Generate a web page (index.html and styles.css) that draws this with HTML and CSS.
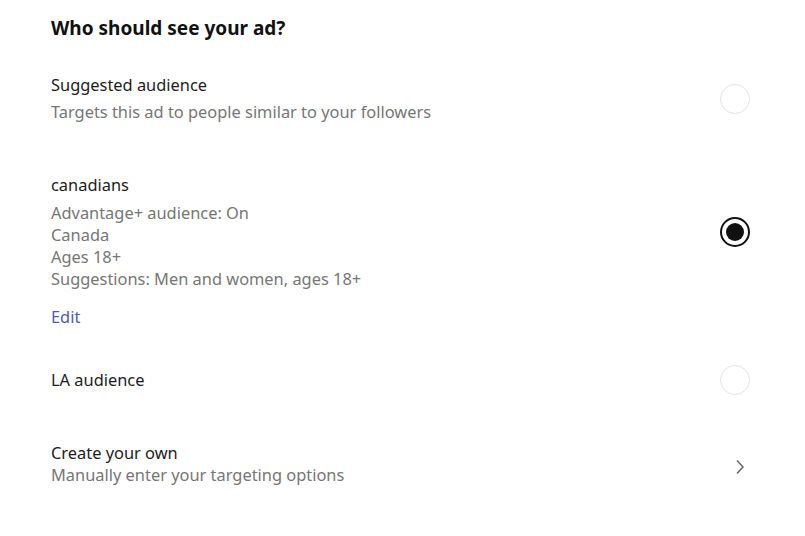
FILE: index.html
```html
<!DOCTYPE html>
<html>
<head>
<meta charset="utf-8">
<link rel="stylesheet" href="styles.css">
</head>
<body>
<div class="page">
  <h1 class="title">Who should see your ad?</h1>

  <div class="row row-suggested">
    <div class="info">
      <div class="name">Suggested audience</div>
      <div class="sub sub-gap">Targets this ad to people similar to your followers</div>
    </div>
    <span class="radio"></span>
  </div>

  <div class="row row-canadians">
    <div class="info">
      <div class="main-block">
        <div class="name">canadians</div>
        <div class="details">
          <div class="sub">Advantage+ audience: On</div>
          <div class="sub">Canada</div>
          <div class="sub">Ages 18+</div>
          <div class="sub">Suggestions: Men and women, ages 18+</div>
        </div>
      </div>
      <a class="edit">Edit</a>
    </div>
    <span class="radio selected"></span>
  </div>

  <div class="row row-la">
    <div class="info">
      <div class="name">LA audience</div>
    </div>
    <span class="radio"></span>
  </div>

  <div class="row row-create">
    <div class="info">
      <div class="name">Create your own</div>
      <div class="sub">Manually enter your targeting options</div>
    </div>
    <svg class="chevron" width="10" height="16" viewBox="0 0 10 16"><path d="M2 1.5 L8 8 L2 14.5" fill="none" stroke="#666" stroke-width="1.5"/></svg>
  </div>
</div>
</body>
</html>
```

FILE: styles.css
```css
html, body {
  margin: 0;
  padding: 0;
  background: #ffffff;
}
body {
  font-family: "Noto Sans", "Open Sans", Arial, sans-serif;
  color: #1c1c1c;
  font-size: 16.4px;
  line-height: 22px;
}
.page {
  padding: 16px 55px 0 51px;
}
.title {
  margin: 0;
  font-size: 19px;
  line-height: 24px;
  font-weight: 700;
  color: #111;
}
.row {
  display: flex;
  justify-content: space-between;
  align-items: center;
}
.row-suggested { margin-top: 34px; }
.row-canadians { margin-top: 51px; align-items: flex-start; }
.row-la { margin-top: 37px; }
.row-create { margin-top: 47px; }

.name { color: #1c1c1c; }
.sub { color: #767676; }
.sub-gap { margin-top: 5px; }
.details { margin-top: 6px; }
.edit {
  display: block;
  margin-top: 16px;
  color: #4f5bb5;
}
.radio {
  box-sizing: border-box;
  width: 30px;
  height: 30px;
  border-radius: 50%;
  border: 1px solid #e4e4e4;
  flex: none;
}
.row-canadians .radio { margin-top: 43px; }
.radio.selected {
  border: 2px solid #111;
  display: flex;
  align-items: center;
  justify-content: center;
}
.radio.selected::after {
  content: "";
  width: 18px;
  height: 18px;
  border-radius: 50%;
  background: #111;
}
.chevron {
  margin-right: 5px;
  margin-top: 6px;
  flex: none;
}
```
